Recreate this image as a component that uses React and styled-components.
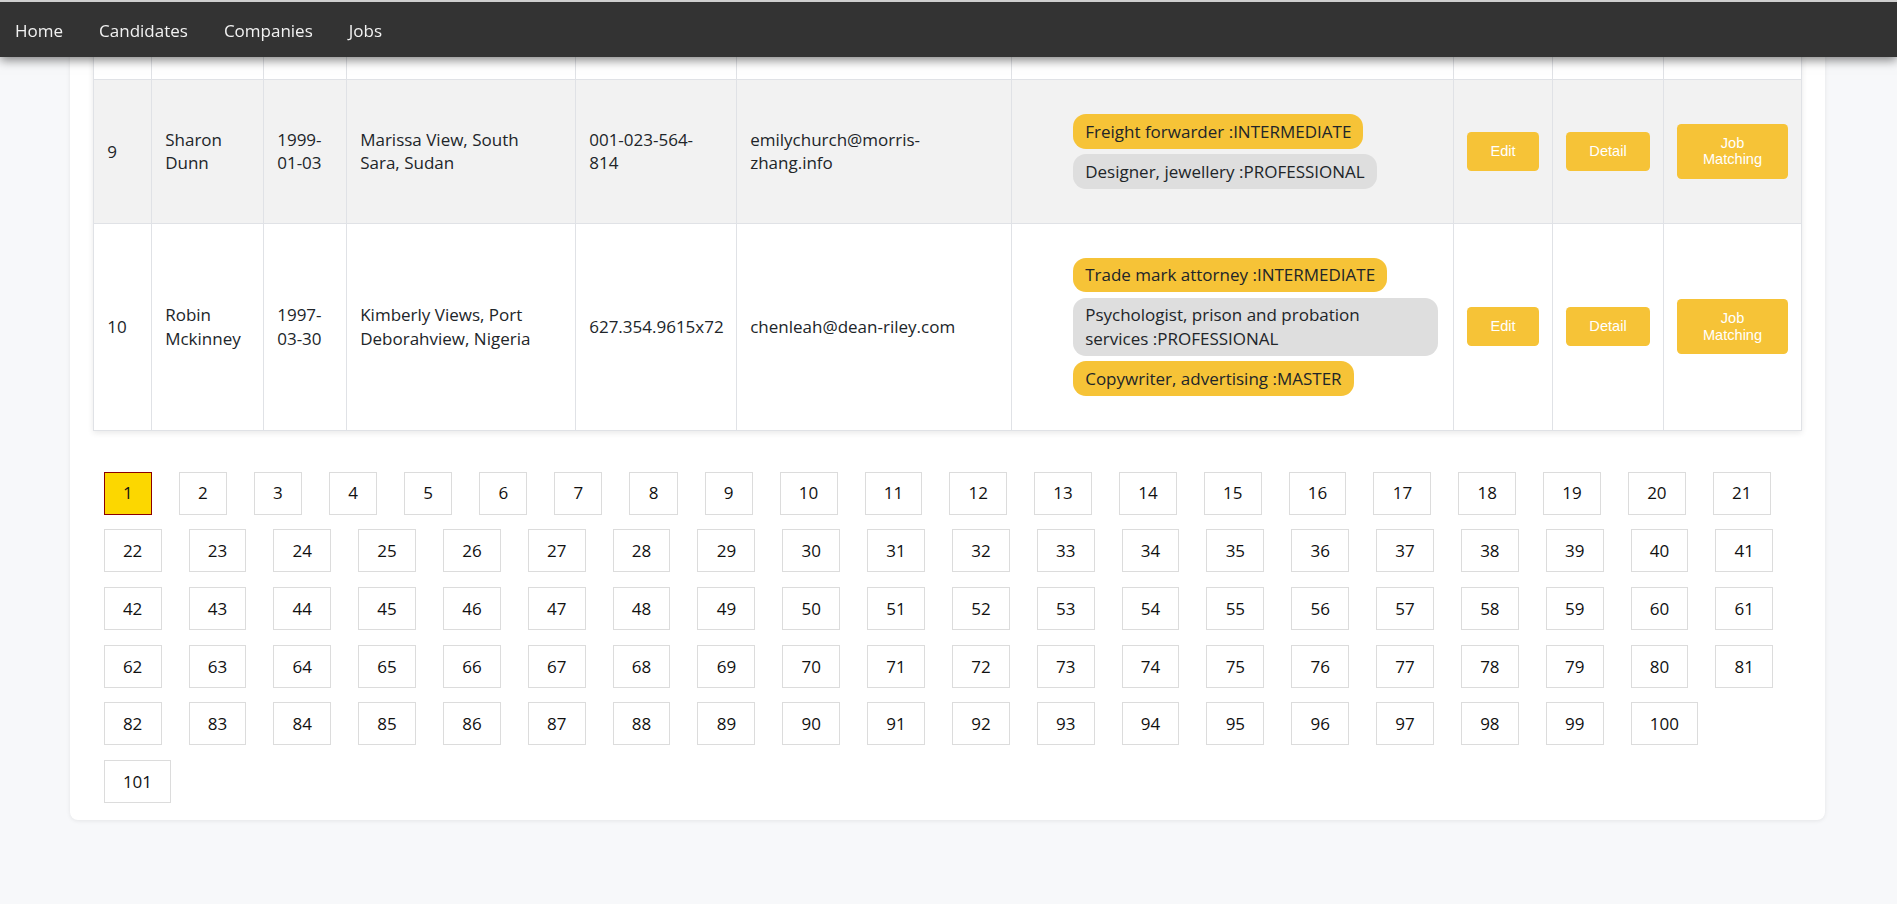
import React from 'react';
import styled, { createGlobalStyle } from 'styled-components';

const GlobalStyle = createGlobalStyle`
  body {
    margin: 0;
    background-color: #f7f8fa;
    font-family: 'Open Sans', 'Noto Sans', sans-serif;
    color: #212529;
  }
`;

const NavBar = styled.nav`
  position: fixed;
  top: 0;
  left: 0;
  right: 0;
  z-index: 10;
  height: 55px;
  display: flex;
  align-items: stretch;
  background-color: #333;
  border-top: 2px solid #cfcfcf;
  box-shadow: 0 3px 10px rgba(0, 0, 0, 0.5);
`;

const NavLink = styled.a`
  display: flex;
  align-items: center;
  padding: 2px 18px 0;
  color: #f2f2f2;
  font-size: 17px;
  text-decoration: none;

  &:first-child {
    padding-left: 15px;
  }
`;

const Main = styled.main`
  padding: 0 72px 60px 70px;
`;

const Card = styled.section`
  padding: 24px 24px 17px 23px;
  background-color: #fff;
  border-radius: 0 0 8px 8px;
  box-shadow: 0 1px 4px rgba(0, 0, 0, 0.08);
`;

const Table = styled.table`
  width: 100%;
  table-layout: fixed;
  border-collapse: collapse;
  font-size: 17px;
  line-height: 23.4px;
  box-shadow: 0 2px 6px rgba(0, 0, 0, 0.09);
`;

const Col = styled.col`
  width: ${(p) => p.$w}px;
`;

const Row = styled.tr`
  background-color: ${(p) => (p.$striped ? '#f2f2f2' : '#fff')};
`;

const Cell = styled.td`
  border: 1px solid #e0e2e6;
  padding: 13.2px;
  padding-right: ${(p) => (p.$tight ? '17px' : '13.2px')};
  vertical-align: middle;
`;

const TailCell = styled.td`
  border: 1px solid #e0e2e6;
  height: 54px;
  padding: 0;
`;

const SkillList = styled.ul`
  list-style: none;
  margin: 21px 2px 21px 0;
  padding: 0 0 0 48px;
  display: flex;
  flex-direction: column;
  align-items: flex-start;
  gap: 5.5px;
`;

const Pill = styled.li`
  max-width: 100%;
  box-sizing: border-box;
  padding: 5.5px 12px;
  border-radius: 13px;
  background-color: ${(p) => (p.$alt ? '#dedede' : '#f6c337')};
`;

const ActionButton = styled.button`
  display: block;
  width: 100%;
  padding: 11px 20px;
  border: none;
  border-radius: 4.4px;
  background-color: #f6c337;
  color: #fff;
  font-family: 'Liberation Sans', Arial, sans-serif;
  font-size: 14.6px;
  line-height: 16.8px;
  cursor: pointer;
`;

const Pagination = styled.ul`
  list-style: none;
  margin: 41px 0 0;
  padding: 0 15px 0 10.7px;
  display: flex;
  flex-wrap: wrap;
  column-gap: 27px;
  row-gap: 14.7px;
`;

const PageButton = styled.li`
  padding: 8.8px 18.2px;
  font-size: 17px;
  line-height: 23.4px;
  color: #111;
  border: 1px solid ${(p) => (p.$active ? '#8b0000' : '#dcdcdc')};
  background-color: ${(p) => (p.$active ? '#fcd700' : '#fff')};
  cursor: pointer;
`;

const widths = [58, 112, 83, 229, 161, 275, 442, 99, 111, 138];

const candidates = [
  {
    id: 9,
    name: 'Sharon Dunn',
    birth: '1999-01-03',
    address: 'Marissa View, South Sara, Sudan',
    phone: '001-023-564-814',
    email: 'emilychurch@morris-zhang.info',
    skills: [
      ['Freight forwarder', 'INTERMEDIATE'],
      ['Designer, jewellery', 'PROFESSIONAL'],
    ],
  },
  {
    id: 10,
    name: 'Robin Mckinney',
    birth: '1997-03-30',
    address: 'Kimberly Views, Port Deborahview, Nigeria',
    phone: '627.354.9615x72',
    email: 'chenleah@dean-riley.com',
    skills: [
      ['Trade mark attorney', 'INTERMEDIATE'],
      ['Psychologist, prison and probation services', 'PROFESSIONAL'],
      ['Copywriter, advertising', 'MASTER'],
    ],
  },
];

const pages = Array.from({ length: 101 }, (_, i) => i + 1);

const App = () => (
  <>
    <GlobalStyle />
    <NavBar>
      <NavLink href="#">Home</NavLink>
      <NavLink href="#">Candidates</NavLink>
      <NavLink href="#">Companies</NavLink>
      <NavLink href="#">Jobs</NavLink>
    </NavBar>
    <Main>
      <Card>
        <Table>
          <colgroup>
            {widths.map((w, i) => (
              <Col key={i} $w={w} />
            ))}
          </colgroup>
          <tbody>
            {/* tail of the previous row, scrolled under the navbar */}
            <Row>
              {widths.map((w, i) => (
                <TailCell key={i} />
              ))}
            </Row>
            {candidates.map((c, idx) => (
              <Row key={c.id} $striped={idx % 2 === 0}>
                <Cell>{c.id}</Cell>
                <Cell>{c.name}</Cell>
                <Cell>{c.birth}</Cell>
                <Cell>{c.address}</Cell>
                <Cell $tight>{c.phone}</Cell>
                <Cell>{c.email}</Cell>
                <Cell>
                  <SkillList>
                    {c.skills.map(([skill, level], i) => (
                      <Pill key={skill} $alt={i % 2 === 1}>
                        {skill} :{level}
                      </Pill>
                    ))}
                  </SkillList>
                </Cell>
                <Cell>
                  <ActionButton>Edit</ActionButton>
                </Cell>
                <Cell>
                  <ActionButton>Detail</ActionButton>
                </Cell>
                <Cell>
                  <ActionButton>Job Matching</ActionButton>
                </Cell>
              </Row>
            ))}
          </tbody>
        </Table>
        <Pagination>
          {pages.map((p) => (
            <PageButton key={p} $active={p === 1}>
              {p}
            </PageButton>
          ))}
        </Pagination>
      </Card>
    </Main>
  </>
);

export default App;
